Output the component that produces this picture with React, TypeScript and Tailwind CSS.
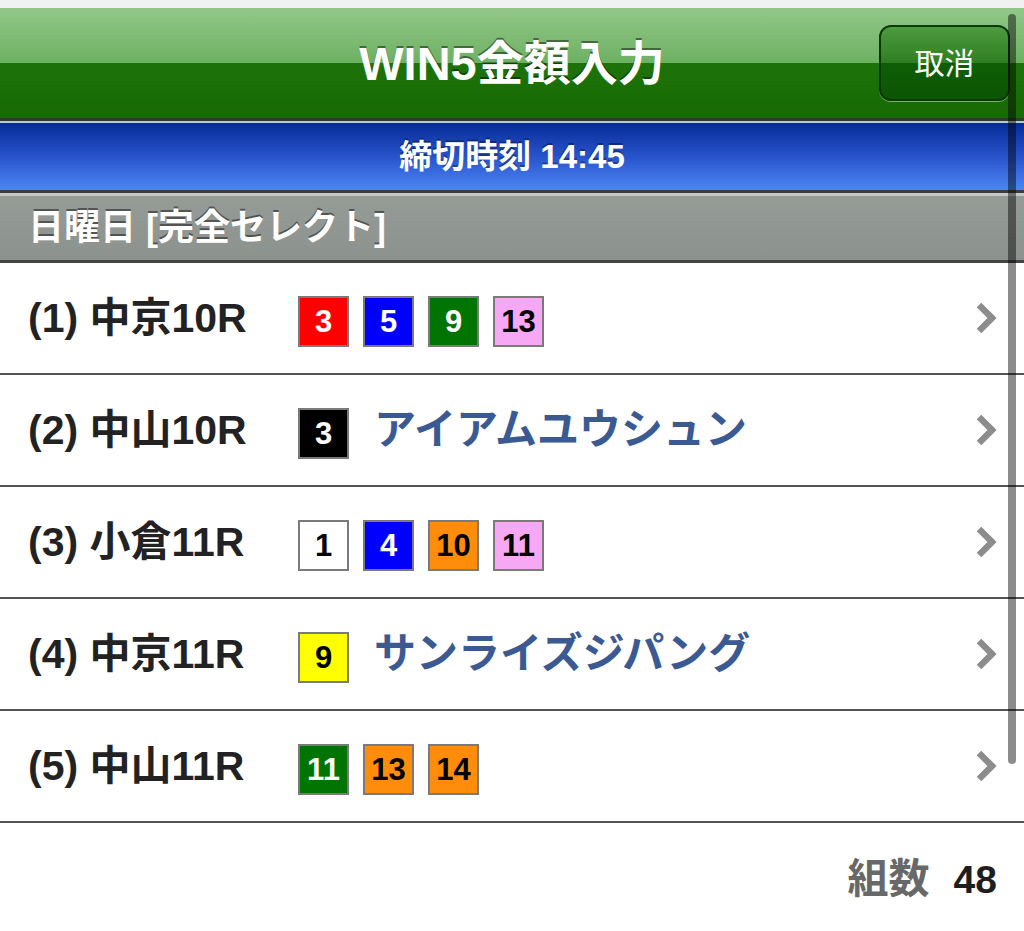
import React from 'react';

type Horse = { no: number; color: string };

type Race = {
  label: string;
  horses: Horse[];
  name?: string;
};

const RED = 'bg-[#ff0000] text-white';
const BLUE = 'bg-[#0000ff] text-white';
const GREEN = 'bg-[#007400] text-white';
const PINK = 'bg-[#f7a8f5] text-black';
const BLACK = 'bg-black text-white';
const WHITE = 'bg-white text-black';
const ORANGE = 'bg-[#ff8c0a] text-black';
const YELLOW = 'bg-[#ffff00] text-black';

const races: Race[] = [
  {
    label: '(1) 中京10R',
    horses: [
      { no: 3, color: RED },
      { no: 5, color: BLUE },
      { no: 9, color: GREEN },
      { no: 13, color: PINK },
    ],
  },
  { label: '(2) 中山10R', horses: [{ no: 3, color: BLACK }], name: 'アイアムユウシュン' },
  {
    label: '(3) 小倉11R',
    horses: [
      { no: 1, color: WHITE },
      { no: 4, color: BLUE },
      { no: 10, color: ORANGE },
      { no: 11, color: PINK },
    ],
  },
  { label: '(4) 中京11R', horses: [{ no: 9, color: YELLOW }], name: 'サンライズジパング' },
  {
    label: '(5) 中山11R',
    horses: [
      { no: 11, color: GREEN },
      { no: 13, color: ORANGE },
      { no: 14, color: ORANGE },
    ],
  },
];

const font = 'font-["Liberation_Sans","Noto_Sans_CJK_JP",sans-serif]';

function Chevron() {
  return (
    <svg width="22" height="34" viewBox="0 0 22 34" className="shrink-0">
      <polyline points="4,4 17,17 4,30" fill="none" stroke="#8c8c8c" strokeWidth="6.5" />
    </svg>
  );
}

function RaceRow({ race }: { race: Race }) {
  return (
    <div className="flex h-[112px] items-center border-b-[2px] border-[#555] pl-[28px] pr-[27px]">
      <div className="w-[270px] shrink-0 text-[41px] font-bold leading-none text-[#222]">
        {race.label}
      </div>
      <div className="flex flex-1 items-center gap-[14px]">
        {race.horses.map((h, i) => (
          <div
            key={i}
            className={`mt-[6px] flex h-[51px] w-[51px] items-center justify-center border-[2px] border-[#7a7a7a] text-[31px] font-bold leading-none ${h.color}`}
          >
            {h.no}
          </div>
        ))}
        {race.name && (
          <span className="ml-[11px] text-[42px] font-bold leading-none text-[#3b5a92]">
            {race.name}
          </span>
        )}
      </div>
      <Chevron />
    </div>
  );
}

export default function App() {
  return (
    <div className={`relative h-[931px] w-[1024px] overflow-hidden bg-white ${font}`}>
      {/* strip above the nav bar */}
      <div className="h-[8px] bg-[#f1f1f1]" />

      {/* nav bar */}
      <div className="grid h-[110px] grid-cols-[1fr_auto_1fr] items-center bg-[linear-gradient(to_bottom,#93c78a_0%,#6db162_50%,#1d7309_50%,#176a05_100%)]">
        <div />
        <h1 className="text-[47px] font-bold leading-none text-white [text-shadow:0_-2px_0_rgba(0,0,0,0.45)]">
          WIN5金額入力
        </h1>
        <div className="flex justify-end pr-[14px]">
          <button className="flex h-[76px] w-[131px] items-center justify-center rounded-[12px] border-[2px] border-[#0c3a06] bg-[linear-gradient(to_bottom,#4d9a3f_0%,#2f7f22_50%,#0f5e05_50%,#0b5504_100%)] pt-[2px] text-[30px] leading-none text-white shadow-[0_1px_0_rgba(180,230,170,0.6)]">
            取消
          </button>
        </div>
      </div>
      <div className="h-[3px] bg-[#2e3a2e]" />
      <div className="h-[2px] bg-[#b9c7e3]" />

      {/* deadline bar */}
      <div className="flex h-[67px] items-center justify-center bg-[linear-gradient(to_bottom,#072b98,#2b58cf_55%,#4c86f3)]">
        <span className="text-[33px] font-bold leading-none text-white [text-shadow:0_-2px_0_rgba(0,0,0,0.35)]">
          締切時刻 14:45
        </span>
      </div>
      <div className="h-[3px] bg-[#3c3f3e]" />
      <div className="h-[3px] bg-[#c7c9c8]" />

      {/* section header */}
      <div className="flex h-[64px] items-center bg-[linear-gradient(to_bottom,#959b96,#8c928e)] pl-[28px]">
        <span className="text-[36px] font-bold leading-none text-white [text-shadow:0_-2px_0_rgba(0,0,0,0.45)]">
          日曜日 [完全セレクト]
        </span>
      </div>
      <div className="h-[3px] bg-[#444]" />

      {races.map((r, i) => (
        <RaceRow key={i} race={r} />
      ))}

      {/* total */}
      <div className="flex items-center justify-end gap-[24px] pr-[27px] pt-[36px]">
        <span className="text-[41px] font-bold leading-none text-[#686868]">組数</span>
        <span className="text-[39px] font-bold leading-none text-[#1e1e1e]">48</span>
      </div>

      {/* scroll indicator */}
      <div className="absolute right-[8px] top-[14px] h-[750px] w-[8px] rounded-full bg-black/45" />
    </div>
  );
}
